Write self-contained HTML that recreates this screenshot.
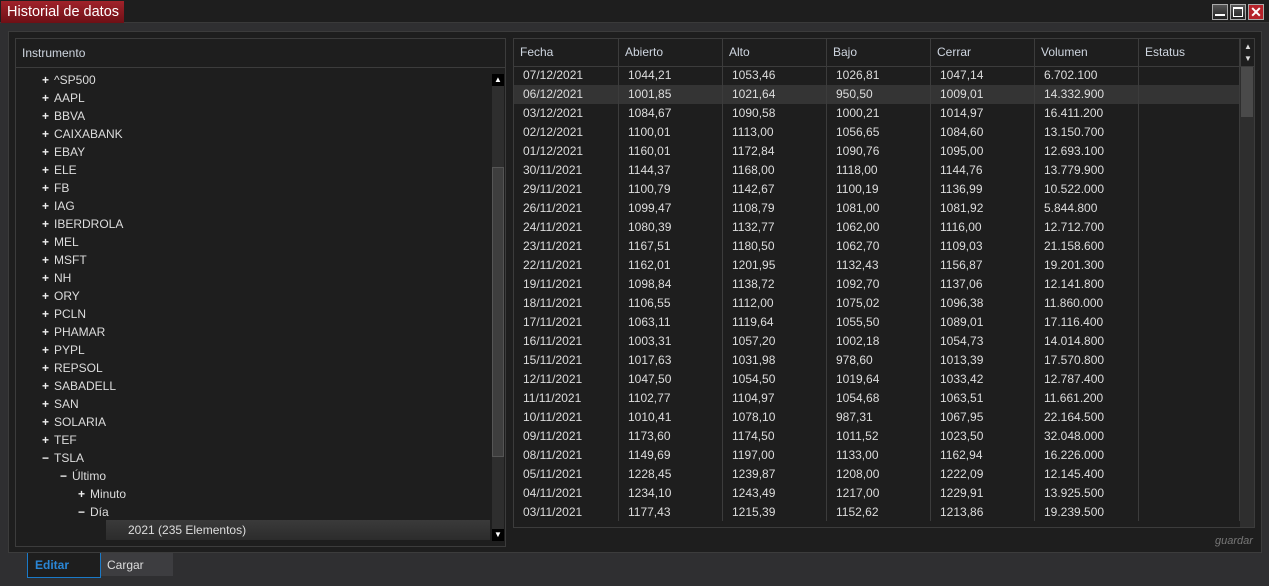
<!DOCTYPE html><html><head><meta charset="utf-8"><style>
*{margin:0;padding:0;box-sizing:border-box}
body{width:1269px;height:586px;background:#2f2f31;font-family:"Liberation Sans",sans-serif;font-size:12px;color:#ddd;position:relative;overflow:hidden}
.abs{position:absolute}
#title{left:0;top:0;width:1269px;height:23px;background:#1e1e1e;border-bottom:1px solid #3a3a3a}
#tab{left:1px;top:1px;width:123px;height:22px;background:linear-gradient(#a0222a,#6e1016);color:#fff;font-size:14.5px;padding:3px 6px;white-space:nowrap;overflow:hidden}
.wb{top:4px;width:16px;height:16px;border:1px solid #aaa;background:linear-gradient(#555,#222)}
#panel{left:8px;top:31px;width:1254px;height:522px;background:#1e1e1e;border:1px solid #3c3c3c}
#left{left:15px;top:38px;width:491px;height:509px;border:1px solid #3c3c3c;background:#1e1e1e}
#left .hd{height:29px;border-bottom:1px solid #3c3c3c;padding:7px 6px;color:#cfd6e0}
.tr{position:absolute;height:18px;line-height:18px;color:#ddd;white-space:nowrap}
.tr b{display:inline-block;width:12px;font-weight:bold;color:#eee}
#right{left:513px;top:38px;width:742px;height:490px;border:1px solid #3c3c3c;background:#1e1e1e;overflow:hidden}
.th{position:absolute;top:0;height:27px;line-height:27px;color:#cfd6e0;padding-left:6px}
.vl{position:absolute;top:0;width:1px;height:482px;background:#3c3c3c}
.row{position:absolute;left:0;width:726px;height:19px;line-height:19px}
.row span{position:absolute;top:0;white-space:nowrap}
.row.sel{background:#343434}
</style></head><body>
<div id="title" class="abs"></div>
<div id="tab" class="abs">Historial de datos</div>
<div class="abs wb" style="left:1212px"><div style="position:absolute;left:2px;top:9px;width:10px;height:2px;background:#fff"></div></div>
<div class="abs wb" style="left:1230px"><div style="position:absolute;left:2px;top:2px;width:10px;height:10px;border:1px solid #fff;border-top-width:2px"></div></div>
<div class="abs wb" style="left:1248px;background:#b5222a;color:#fff;font-weight:bold;font-size:14px;line-height:14px;text-align:center">✕</div>
<div id="panel" class="abs"></div>
<div id="left" class="abs"><div class="hd">Instrumento</div>
<div class="abs" style="left:476px;top:35px;width:12px;height:467px;background:#2e2e2e"></div>
<div class="abs" style="left:476px;top:128px;width:12px;height:290px;background:#3e3e3e;border:1px solid #555"></div>
<div class="abs" style="left:476px;top:35px;width:12px;height:12px;background:#000;color:#fff;font-size:8px;text-align:center;line-height:12px">▲</div>
<div class="abs" style="left:476px;top:490px;width:12px;height:12px;background:#000;color:#fff;font-size:8px;text-align:center;line-height:12px">▼</div>
<div class="abs" style="left:90px;top:481px;width:384px;height:20px;background:linear-gradient(#3a3a3a,#2c2c2c)"></div>
<div id="tree"></div>
</div>
<div id="right" class="abs">
<div class="abs" style="left:0;top:27px;width:726px;height:1px;background:#3c3c3c"></div>
<div id="tb"></div>
<div class="abs" style="left:726px;top:0;width:15px;height:28px;border-bottom:1px solid #3c3c3c;border-left:1px solid #3c3c3c;color:#ddd;font-size:8px;line-height:12px;text-align:center;padding-top:2px">▲<br>▼</div>
<div class="abs" style="left:726px;top:28px;width:15px;height:462px;background:#2e2e2e"></div>
<div class="abs" style="left:727px;top:28px;width:12px;height:50px;background:#4a4a4a"></div>
</div>
<div class="abs" style="left:1215px;top:535px;color:#777;font-style:italic;font-size:11px">guardar</div>
<div class="abs" style="left:27px;top:553px;width:74px;height:25px;border:1px solid #1a7ac8;border-top:none;background:#1e1e1e;color:#2a86d6;font-weight:bold;padding:5px 7px">Editar</div>
<div class="abs" style="left:101px;top:553px;width:72px;height:23px;background:#3d3d40;color:#ddd;padding:5px 6px">Cargar</div>
<script>
var t=["^SP500","AAPL","BBVA","CAIXABANK","EBAY","ELE","FB","IAG","IBERDROLA","MEL","MSFT","NH","ORY","PCLN","PHAMAR","PYPL","REPSOL","SABADELL","SAN","SOLARIA","TEF"];
var h="";t.forEach(function(n,i){h+='<div class="tr" style="left:26px;top:'+(32+i*18)+'px"><b>+</b>'+n+'</div>'});
h+='<div class="tr" style="left:26px;top:410px"><b>−</b>TSLA</div><div class="tr" style="left:44px;top:428px"><b>−</b>Último</div><div class="tr" style="left:62px;top:446px"><b>+</b>Minuto</div><div class="tr" style="left:62px;top:464px"><b>−</b>Día</div><div class="tr" style="left:112px;top:482px">2021 (235 Elementos)</div>';
document.getElementById("tree").innerHTML=h;
var d=`07/12/2021 1044,21 1053,46 1026,81 1047,14 6.702.100
06/12/2021 1001,85 1021,64 950,50 1009,01 14.332.900
03/12/2021 1084,67 1090,58 1000,21 1014,97 16.411.200
02/12/2021 1100,01 1113,00 1056,65 1084,60 13.150.700
01/12/2021 1160,01 1172,84 1090,76 1095,00 12.693.100
30/11/2021 1144,37 1168,00 1118,00 1144,76 13.779.900
29/11/2021 1100,79 1142,67 1100,19 1136,99 10.522.000
26/11/2021 1099,47 1108,79 1081,00 1081,92 5.844.800
24/11/2021 1080,39 1132,77 1062,00 1116,00 12.712.700
23/11/2021 1167,51 1180,50 1062,70 1109,03 21.158.600
22/11/2021 1162,01 1201,95 1132,43 1156,87 19.201.300
19/11/2021 1098,84 1138,72 1092,70 1137,06 12.141.800
18/11/2021 1106,55 1112,00 1075,02 1096,38 11.860.000
17/11/2021 1063,11 1119,64 1055,50 1089,01 17.116.400
16/11/2021 1003,31 1057,20 1002,18 1054,73 14.014.800
15/11/2021 1017,63 1031,98 978,60 1013,39 17.570.800
12/11/2021 1047,50 1054,50 1019,64 1033,42 12.787.400
11/11/2021 1102,77 1104,97 1054,68 1063,51 11.661.200
10/11/2021 1010,41 1078,10 987,31 1067,95 22.164.500
09/11/2021 1173,60 1174,50 1011,52 1023,50 32.048.000
08/11/2021 1149,69 1197,00 1133,00 1162,94 16.226.000
05/11/2021 1228,45 1239,87 1208,00 1222,09 12.145.400
04/11/2021 1234,10 1243,49 1217,00 1229,91 13.925.500
03/11/2021 1177,43 1215,39 1152,62 1213,86 19.239.500`;
var cols=[0,105,209,313,417,521,625],names=["Fecha","Abierto","Alto","Bajo","Cerrar","Volumen","Estatus"];
var r="";
d.split("\n").forEach(function(l,i){var c=l.split(" ");var top=27+i*19;
r+='<div class="row'+(i==1?' sel':'')+'" style="top:'+top+'px">'+c.map(function(x,j){return '<span style="left:'+(cols[j]+9)+'px">'+x+'</span>'}).join('')+'</div>'});
names.forEach(function(n,j){r+='<div class="th" style="left:'+cols[j]+'px">'+n+'</div>';if(j>0)r+='<div class="vl" style="left:'+(cols[j]-1)+'px"></div>'});
r+='<div class="vl" style="left:725px"></div>';
document.getElementById("tb").innerHTML=r;
</script>
</body></html>
